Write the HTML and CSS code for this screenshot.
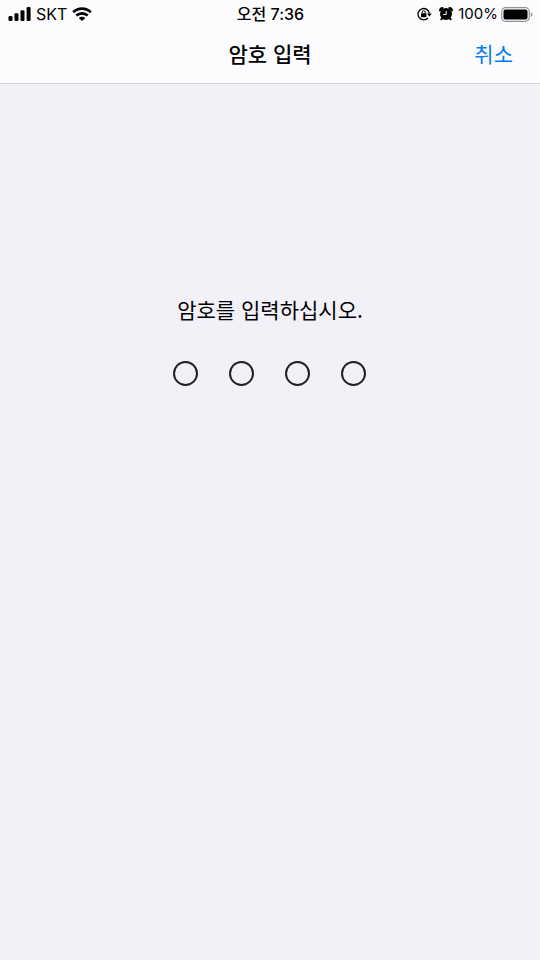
FILE: index.html
```html
<!DOCTYPE html>
<html lang="ko">
<head>
<meta charset="utf-8">
<meta name="viewport" content="width=device-width, initial-scale=1">
<title>암호 입력</title>
<link rel="stylesheet" href="styles.css">
</head>
<body>
<header class="top">
  <div class="status">
    <div class="status-side">
      <svg class="signal" width="23" height="14" viewBox="0 0 23 14" aria-hidden="true">
        <rect x=".5" y="9" width="4" height="5" rx="1.200"/>
        <rect x="6.500" y="6.300" width="4" height="7.700" rx="1.200"/>
        <rect x="12.500" y="3.300" width="4" height="10.700" rx="1.200"/>
        <rect x="18.600" y="0" width="4" height="14" rx="1.200"/>
      </svg>
      <span class="carrier">SKT</span>
      <svg class="wifi" width="20" height="14" viewBox="0 0 20 14" aria-hidden="true">
        <path d="M1.200 5.200C6.200.400 13.800.400 18.800 5.200M4.300 8.500C7.600 5.600 12.400 5.600 15.700 8.500" fill="none" stroke="#000" stroke-width="2.700"/>
        <path d="M10 14 6.700 10.900Q10 8.700 13.300 10.900Z"/>
      </svg>
    </div>
    <time class="clock">오전 7:36</time>
    <div class="status-side status-end">
      <svg class="lock" width="15" height="14" viewBox="0 0 15 14" aria-hidden="true">
        <path d="M11 11A5.700 5.700 0 1 1 12.400 6.600" fill="none" stroke="#000" stroke-width="1.300"/>
        <path d="M10 6.400H14.800L12.400 9.400Z"/>
        <rect x="4" y="6.300" width="5.400" height="4" rx=".5"/>
        <path d="M5.200 6.500V5.200a1.500 1.500 0 0 1 3 0V6.500" fill="none" stroke="#000" stroke-width="1"/>
      </svg>
      <svg class="alarm" width="14" height="14" viewBox="0 0 14 14" aria-hidden="true">
        <circle cx="7" cy="7" r="6"/>
        <path d="M.900 4.800A2.600 2.600 0 0 1 5 1.100ZM13.100 4.800A2.600 2.600 0 0 0 9 1.100Z"/>
        <path d="M3.200 11.300 2.300 12.300M10.800 11.300 11.700 12.300" stroke="#000" stroke-width="2" stroke-linecap="round"/>
        <path d="M7.200 4V7.500H4.200" fill="none" stroke="#fff" stroke-width="1"/>
      </svg>
      <span class="percent">100%</span>
      <svg width="32" height="15" viewBox="0 0 32 15" aria-hidden="true">
        <rect x=".7" y=".7" width="27.600" height="13.600" rx="4" fill="none" stroke="#929295" stroke-width="1.200"/>
        <rect x="2.500" y="2.500" width="24" height="10" rx="2"/>
        <path d="M29.800 5.200Q31.500 5.800 31.500 7.500T29.800 9.800Z" fill="#929295"/>
      </svg>
    </div>
  </div>
  <nav class="nav">
    <h1 class="title">암호 입력</h1>
    <button class="cancel" type="button">취소</button>
  </nav>
</header>
<main class="content">
  <form>
    <fieldset class="passcode">
      <legend class="prompt">암호를 입력하십시오.</legend>
      <div class="digits">
        <input class="digit" type="password" inputmode="numeric" maxlength="1" aria-label="첫 번째 숫자">
        <input class="digit" type="password" inputmode="numeric" maxlength="1" aria-label="두 번째 숫자">
        <input class="digit" type="password" inputmode="numeric" maxlength="1" aria-label="세 번째 숫자">
        <input class="digit" type="password" inputmode="numeric" maxlength="1" aria-label="네 번째 숫자">
      </div>
    </fieldset>
  </form>
</main>
</body>
</html>
```
FILE: styles.css
```css
* {
  box-sizing: border-box;
}

body {
  margin: 0;
  min-height: 100vh;
  background: #f2f1f8;
  color: #000;
  font-family: Inter, "Noto Sans CJK KR", sans-serif;
}

.top {
  background: #fcfcfe;
  border-bottom: 1px solid #d2d2d6;
}

.status {
  display: grid;
  grid-template-columns: 1fr auto 1fr;
  align-items: center;
  height: 28px;
  padding: 0 7px 0 8px;
  font-size: 16px;
  line-height: 28px;
}

.status-side {
  display: flex;
  align-items: center;
}

.status-end {
  justify-content: flex-end;
}

.carrier {
  margin: 0 5px;
}

.clock {
  font-weight: 500;
}

.lock {
  margin-right: 7px;
}

.alarm {
  margin-right: 5px;
}

.percent {
  margin-right: 3px;
  font-size: 15px;
}

.nav {
  display: grid;
  grid-template-columns: 1fr auto 1fr;
  align-items: center;
  height: 55px;
  padding: 0 27px 6px;
  font-family: "Noto Sans CJK KR", sans-serif;
}

.title {
  grid-column: 2;
  margin: 0;
  font-size: 21px;
  font-weight: 500;
  line-height: 32px;
}

.cancel {
  justify-self: end;
  padding: 0;
  border: 0;
  background: none;
  color: #087aeb;
  font: 400 21px/32px "Noto Sans CJK KR", sans-serif;
  cursor: pointer;
}

.content {
  padding-top: 209px;
}

.passcode {
  margin: 0;
  padding: 0;
  border: 0;
}

.prompt {
  margin: 0 auto;
  padding: 0;
  font: 400 21px/32px "Noto Sans CJK KR", sans-serif;
}

.digits {
  display: flex;
  justify-content: center;
  gap: 31px;
  padding: 36px 1px 0 0;
}

.digit {
  width: 25px;
  height: 25px;
  padding: 0;
  border: 2px solid #202024;
  border-radius: 50%;
  background: transparent;
  text-align: center;
}
```
